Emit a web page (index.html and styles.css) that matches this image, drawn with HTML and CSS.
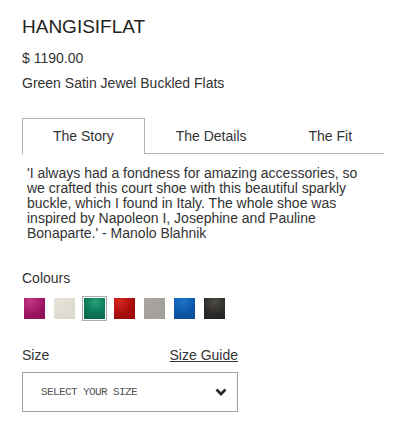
FILE: index.html
```html
<!DOCTYPE html>
<html lang="en">
<head>
    <meta charset="UTF-8">
    <meta name="viewport" content="width=device-width, initial-scale=1.0">
    <title>Hangisiflat</title>
    <link rel="stylesheet" href="styles.css">
</head>
<body>

<div class="product">
    <h1 class="product-name">HANGISIFLAT</h1>
    <p class="price">$ 1190.00</p>
    <p class="subtitle">Green Satin Jewel Buckled Flats</p>

    <div class="tabs">
        <span class="tab active">The Story</span>
        <span class="tab">The Details</span>
        <span class="tab">The Fit</span>
    </div>
    <p class="story">'I always had a fondness for amazing accessories, so we crafted this court shoe with this beautiful sparkly buckle, which I found in Italy. The whole shoe was inspired by Napoleon I, Josephine and Pauline Bonaparte.' - Manolo Blahnik</p>

    <p class="label">Colours</p>
    <div class="swatches">
        <span class="swatch"><span class="chip fuchsia"></span></span>
        <span class="swatch"><span class="chip cream"></span></span>
        <span class="swatch selected"><span class="chip green"></span></span>
        <span class="swatch"><span class="chip red"></span></span>
        <span class="swatch"><span class="chip grey"></span></span>
        <span class="swatch"><span class="chip blue"></span></span>
        <span class="swatch"><span class="chip black"></span></span>
    </div>

    <div class="size-row">
        <span class="label">Size</span>
        <a href="#" class="size-guide">Size Guide</a>
    </div>
    <div class="select">
        <span>SELECT YOUR SIZE</span>
        <svg width="12" height="8" viewBox="0 0 12 8"><polyline points="1.5,1.5 6,6 10.5,1.5" fill="none" stroke="#2b2b2b" stroke-width="2.8"/></svg>
    </div>
</div>

</body>
</html>
```

FILE: styles.css
```css
body {
    margin: 0;
    padding: 0;
    font-family: 'Liberation Sans', Arial, sans-serif;
    color: #333;
    background: #ffffff;
}
.product {
    width: 362px;
    padding: 16px 0 0 22px;
}
.product p {
    margin: 0;
}
.product-name {
    margin: 0;
    font-size: 19px;
    line-height: 22px;
    font-weight: normal;
    color: #222;
}
.price {
    margin-top: 12px !important;
    font-size: 14px;
    line-height: 16px;
}
.subtitle {
    margin-top: 9px !important;
    font-size: 14px;
    line-height: 16px;
}
.tabs {
    display: flex;
    margin-top: 27px;
    border-bottom: 1px solid #b4b4b4;
}
.tab {
    flex-shrink: 0;
    white-space: nowrap;
    padding: 9px 30px;
    font-size: 14px;
    line-height: 16px;
    border: 1px solid transparent;
    border-bottom: none;
    margin-bottom: -1px;
    color: #333;
}
.tab.active {
    border-color: #b4b4b4;
    background: #ffffff;
    padding-bottom: 10px;
}
.story {
    margin-top: 12px !important;
    padding: 0 8px 0 5px;
    font-size: 14px;
    line-height: 15px;
}
.label {
    font-size: 14px;
    line-height: 16px;
}
p.label {
    margin-top: 29px !important;
}
.swatches {
    display: flex;
    gap: 5px;
    margin-top: 10px;
}
.swatch {
    width: 21px;
    height: 21px;
    padding: 1px;
    border: 1px solid transparent;
}
.swatch.selected {
    border-color: #a6aeae;
}
.chip {
    display: block;
    width: 21px;
    height: 21px;
}
.fuchsia { background: radial-gradient(circle at 30% 15%, #c43584, #9a1460 60%, #8c1258); }
.cream { background: linear-gradient(135deg, #e6e3da, #dad6cb); }
.green { background: radial-gradient(circle at 55% 20%, #23a279, #0b7756 55%, #08684b); }
.red { background: radial-gradient(circle at 25% 15%, #d8261f, #a90d0d 55%, #980a0a); }
.grey { background: linear-gradient(135deg, #aaa6a1, #a19d98); }
.blue { background: radial-gradient(circle at 40% 15%, #1d74cc, #0b55a6 60%, #0a4c96); }
.black { background: radial-gradient(circle at 50% 20%, #4d4a47, #2c2a28 60%, #222); }
.size-row {
    display: flex;
    justify-content: space-between;
    width: 216px;
    margin-top: 26px;
}
.size-guide {
    font-size: 14px;
    line-height: 16px;
    color: #333;
    text-decoration: underline;
}
.select {
    display: flex;
    align-items: center;
    justify-content: space-between;
    box-sizing: border-box;
    width: 216px;
    height: 40px;
    margin-top: 9px;
    padding: 0 10px 0 18px;
    border: 1px solid #a0a0a0;
    font-family: 'Liberation Mono', 'Courier New', monospace;
    font-size: 11px;
    letter-spacing: -0.6px;
    color: #555;
}
```
